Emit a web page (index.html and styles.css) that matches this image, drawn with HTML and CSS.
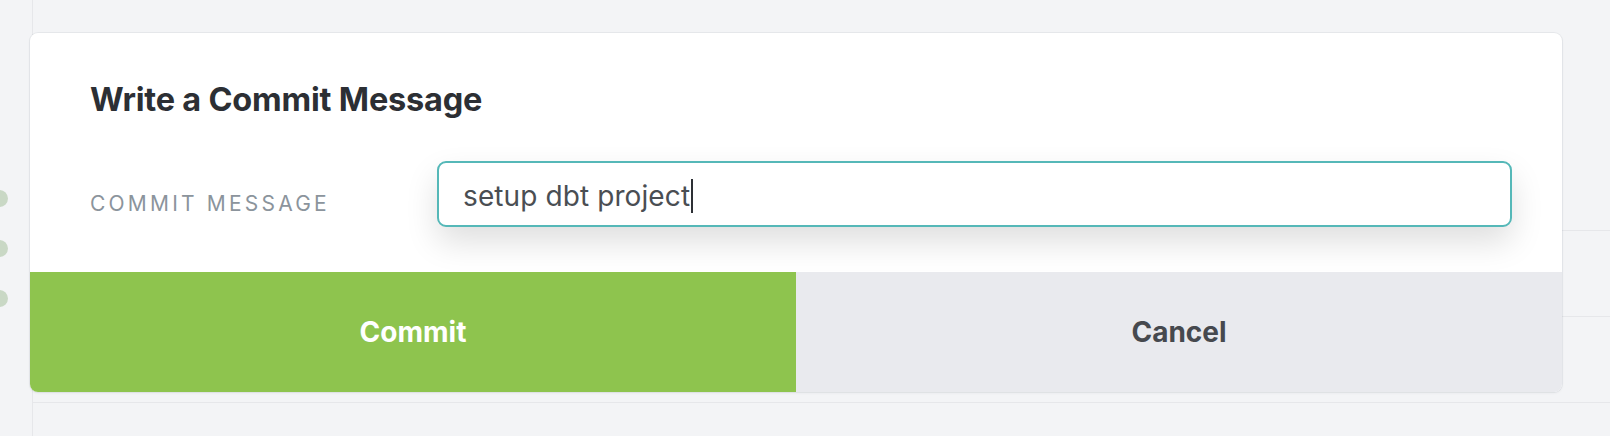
FILE: index.html
```html
<!DOCTYPE html>
<html lang="en">
<head>
<meta charset="utf-8">
<title>Write a Commit Message</title>
<link rel="stylesheet" href="styles.css">
</head>
<body>
<div class="page">
  <aside class="gutter">
    <div class="dots">
      <span class="dot"></span>
      <span class="dot"></span>
      <span class="dot"></span>
    </div>
  </aside>
  <main class="main">
    <div class="row row-first"></div>
    <div class="row"></div>
    <div class="row"></div>
  </main>
</div>

<div class="modal">
  <div class="modal-body">
    <h2 class="modal-title">Write a Commit Message</h2>
    <div class="field">
      <label class="field-label">COMMIT MESSAGE</label>
      <div class="field-input"><span class="field-text">setup dbt project</span><span class="caret"></span></div>
    </div>
  </div>
  <div class="modal-actions">
    <button class="btn btn-commit">Commit</button>
    <button class="btn btn-cancel">Cancel</button>
  </div>
</div>
</body>
</html>
```

FILE: styles.css
```css
* { box-sizing: border-box; }

html, body {
  margin: 0;
  padding: 0;
  width: 1610px;
  height: 436px;
  overflow: hidden;
  background: #f3f4f6;
  font-family: Inter, "Liberation Sans", sans-serif;
}

.page {
  display: flex;
  height: 436px;
}

.gutter {
  width: 33px;
  flex: none;
  border-right: 1px solid #e6e7ea;
}

.dots {
  display: flex;
  flex-direction: column;
  gap: 33px;
  padding-top: 190px;
  margin-left: -9px;
}

.dot {
  width: 17px;
  height: 17px;
  border-radius: 50%;
  background: #c9d8c5;
}

.main {
  flex: 1;
}

.row {
  height: 86px;
  border-bottom: 1px solid #e6e7ea;
}

.row-first {
  height: 231px;
}

.modal {
  position: absolute;
  left: 30px;
  top: 33px;
  width: 1532px;
  height: 359px;
  background: #ffffff;
  border-radius: 8px;
  overflow: hidden;
  box-shadow: 0 0 0 1px rgba(20, 30, 50, 0.05), 0 1px 3px rgba(20, 30, 50, 0.06);
  display: flex;
  flex-direction: column;
}

.modal-body {
  height: 239px;
  padding: 47px 50px 0 60px;
}

.modal-title {
  margin: 0;
  font-size: 32.5px;
  line-height: 39px;
  font-weight: 700;
  color: #2c2f34;
  letter-spacing: -0.2px;
}

.field {
  display: flex;
  align-items: flex-start;
  margin-top: 42px;
}

.field-label {
  width: 347px;
  flex: none;
  margin-top: 30px;
  font-size: 21px;
  line-height: 26px;
  letter-spacing: 3.2px;
  color: #8b949c;
}

.field-input {
  flex: 1;
  height: 66px;
  display: flex;
  align-items: center;
  padding: 3px 24px 0;
  border: 2px solid #55b8b8;
  border-radius: 9px;
  background: #fff;
  box-shadow: 0 15px 32px rgba(0, 0, 0, 0.13);
  font-size: 28px;
  letter-spacing: 0.1px;
  color: #4a4e53;
}

.caret {
  display: inline-block;
  width: 2px;
  height: 34px;
  margin-left: 1px;
  background: #2d3035;
}

.modal-actions {
  flex: 1;
  display: flex;
}

.btn {
  flex: 1;
  border: 0;
  margin: 0;
  padding: 0;
  font-family: Inter, "Liberation Sans", sans-serif;
  font-size: 28px;
  font-weight: 700;
  cursor: pointer;
}

.btn-commit {
  background: #8ec44e;
  color: #ffffff;
}

.btn-cancel {
  background: #e9eaee;
  color: #46494e;
}
```
